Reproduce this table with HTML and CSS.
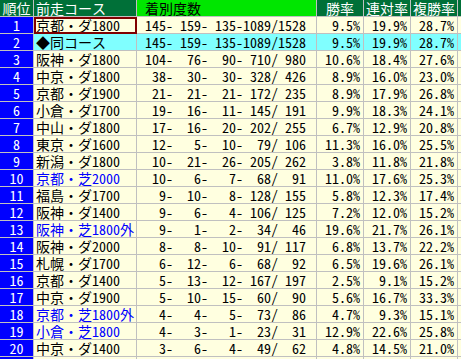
FILE: index.html
```html
<!DOCTYPE html>
<html lang="ja">
<head>
<meta charset="utf-8">
<title>前走コース別成績</title>
<link rel="stylesheet" href="styles.css">
</head>
<body>
<table class="stats">
<thead>
<tr><th class="c-rank">順位</th><th class="c-course">前走コース</th><th class="c-count">着別度数</th><th class="c-rate">勝率</th><th class="c-rate">連対率</th><th class="c-rate">複勝率</th><th class="c-more"></th></tr>
</thead>
<tbody>
<tr><td class="rank">1</td><td class="course current">京都・ダ1800</td><td class="count">145- 159- 135-1089/1528</td><td class="pct win">9.5%</td><td class="pct place">19.9%</td><td class="pct show">28.7%</td><td class="more"></td></tr>
<tr class="same"><td class="rank">2</td><td class="course">◆同コース</td><td class="count">145- 159- 135-1089/1528</td><td class="pct win">9.5%</td><td class="pct place">19.9%</td><td class="pct show">28.7%</td><td class="more"></td></tr>
<tr><td class="rank">3</td><td class="course">阪神・ダ1800</td><td class="count">104-  76-  90- 710/ 980</td><td class="pct win">10.6%</td><td class="pct place">18.4%</td><td class="pct show">27.6%</td><td class="more"></td></tr>
<tr><td class="rank">4</td><td class="course">中京・ダ1800</td><td class="count"> 38-  30-  30- 328/ 426</td><td class="pct win">8.9%</td><td class="pct place">16.0%</td><td class="pct show">23.0%</td><td class="more"></td></tr>
<tr><td class="rank">5</td><td class="course">京都・ダ1900</td><td class="count"> 21-  21-  21- 172/ 235</td><td class="pct win">8.9%</td><td class="pct place">17.9%</td><td class="pct show">26.8%</td><td class="more"></td></tr>
<tr><td class="rank">6</td><td class="course">小倉・ダ1700</td><td class="count"> 19-  16-  11- 145/ 191</td><td class="pct win">9.9%</td><td class="pct place">18.3%</td><td class="pct show">24.1%</td><td class="more"></td></tr>
<tr><td class="rank">7</td><td class="course">中山・ダ1800</td><td class="count"> 17-  16-  20- 202/ 255</td><td class="pct win">6.7%</td><td class="pct place">12.9%</td><td class="pct show">20.8%</td><td class="more"></td></tr>
<tr><td class="rank">8</td><td class="course">東京・ダ1600</td><td class="count"> 12-   5-  10-  79/ 106</td><td class="pct win">11.3%</td><td class="pct place">16.0%</td><td class="pct show">25.5%</td><td class="more"></td></tr>
<tr><td class="rank">9</td><td class="course">新潟・ダ1800</td><td class="count"> 10-  21-  26- 205/ 262</td><td class="pct win">3.8%</td><td class="pct place">11.8%</td><td class="pct show">21.8%</td><td class="more"></td></tr>
<tr><td class="rank">10</td><td class="course turf">京都・芝2000</td><td class="count"> 10-   6-   7-  68/  91</td><td class="pct win">11.0%</td><td class="pct place">17.6%</td><td class="pct show">25.3%</td><td class="more"></td></tr>
<tr><td class="rank">11</td><td class="course">福島・ダ1700</td><td class="count">  9-  10-   8- 128/ 155</td><td class="pct win">5.8%</td><td class="pct place">12.3%</td><td class="pct show">17.4%</td><td class="more"></td></tr>
<tr><td class="rank">12</td><td class="course">阪神・ダ1400</td><td class="count">  9-   6-   4- 106/ 125</td><td class="pct win">7.2%</td><td class="pct place">12.0%</td><td class="pct show">15.2%</td><td class="more"></td></tr>
<tr><td class="rank">13</td><td class="course turf">阪神・芝1800外</td><td class="count">  9-   1-   2-  34/  46</td><td class="pct win">19.6%</td><td class="pct place">21.7%</td><td class="pct show">26.1%</td><td class="more"></td></tr>
<tr><td class="rank">14</td><td class="course">阪神・ダ2000</td><td class="count">  8-   8-  10-  91/ 117</td><td class="pct win">6.8%</td><td class="pct place">13.7%</td><td class="pct show">22.2%</td><td class="more"></td></tr>
<tr><td class="rank">15</td><td class="course">札幌・ダ1700</td><td class="count">  6-  12-   6-  68/  92</td><td class="pct win">6.5%</td><td class="pct place">19.6%</td><td class="pct show">26.1%</td><td class="more"></td></tr>
<tr><td class="rank">16</td><td class="course">京都・ダ1400</td><td class="count">  5-  13-  12- 167/ 197</td><td class="pct win">2.5%</td><td class="pct place">9.1%</td><td class="pct show">15.2%</td><td class="more"></td></tr>
<tr><td class="rank">17</td><td class="course">中京・ダ1900</td><td class="count">  5-  10-  15-  60/  90</td><td class="pct win">5.6%</td><td class="pct place">16.7%</td><td class="pct show">33.3%</td><td class="more"></td></tr>
<tr><td class="rank">18</td><td class="course turf">京都・芝1800外</td><td class="count">  4-   4-   5-  73/  86</td><td class="pct win">4.7%</td><td class="pct place">9.3%</td><td class="pct show">15.1%</td><td class="more"></td></tr>
<tr><td class="rank">19</td><td class="course turf">小倉・芝1800</td><td class="count">  4-   3-   1-  23/  31</td><td class="pct win">12.9%</td><td class="pct place">22.6%</td><td class="pct show">25.8%</td><td class="more"></td></tr>
<tr><td class="rank">20</td><td class="course">中京・ダ1400</td><td class="count">  3-   6-   4-  49/  62</td><td class="pct win">4.8%</td><td class="pct place">14.5%</td><td class="pct show">21.0%</td><td class="more"></td></tr>
<tr><td class="rank">21</td><td class="course"></td><td class="count"></td><td class="pct win"></td><td class="pct place"></td><td class="pct show"></td><td class="more"></td></tr>
</tbody>
</table>
</body>
</html>
```

FILE: styles.css
```css
html, body {
  margin: 0;
  padding: 0;
  background: #ffffff;
  overflow: hidden;
}

body {
  width: 461px;
  height: 359px;
}

.stats {
  border-collapse: separate;
  border-spacing: 0;
  table-layout: fixed;
  width: 488px;
  font-family: "Noto Sans Mono CJK JP", "Noto Sans CJK JP", monospace;
  font-size: 14px;
  line-height: 16px;
}

.stats th,
.stats td {
  box-sizing: border-box;
  padding: 0;
  border-right: 1px solid #c0c0c0;
  border-bottom: 1px solid #c0c0c0;
  white-space: pre;
  overflow: hidden;
  font-weight: normal;
}

.stats th {
  background: #007038;
  color: #ffffff;
}

.c-rank { width: 34px; text-align: center; }
.c-course { width: 103px; text-align: left; padding-left: 2px !important; }
.c-count { width: 180px; text-align: left; padding-left: 8px !important; }
.c-rate { width: 47px; text-align: center; }
.c-more { width: 30px; }

.stats th.c-count {
  background: #00e600;
  color: #000000;
}

.stats td {
  background: #ffffe0;
  color: #000000;
}

.stats tr.same td {
  background: #80ffff;
}

.stats tr td.rank {
  background: #0000ff;
  color: #ffffff;
  text-align: center;
}

.course {
  padding-left: 2px !important;
}

.course.turf {
  color: #0000ff;
}

.course.current {
  outline: 2px solid #800000;
  outline-offset: -2px;
}

.count {
  padding-left: 8px !important;
}

.pct {
  text-align: right;
  padding-right: 3px !important;
}

.win { color: #800000; }
.place { color: #0000ff; }
.show { color: #000000; }
```
